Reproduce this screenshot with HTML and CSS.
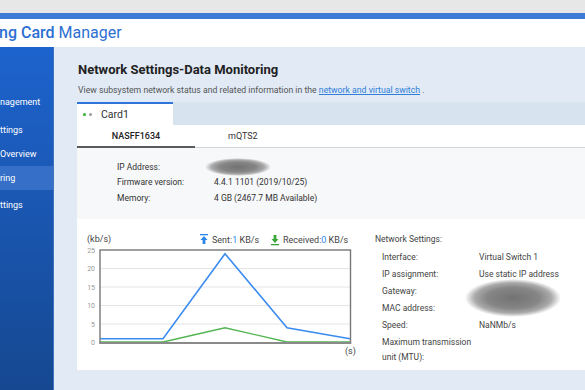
FILE: index.html
```html
<!DOCTYPE html>
<html lang="en">
<head>
    <meta charset="UTF-8">
    <title>Computing Card Manager</title>
    <link rel="stylesheet" href="styles.css">
</head>
<body>
    <div class="topbar"></div>
    <div class="stripe"></div>
    <div class="header">
        <span class="app-title"><b>ng Card</b> Manager</span>
    </div>
    <div class="layout">
        <div class="sidebar">
            <div class="nav-item first">nagement</div>
            <div class="nav-item">ttings</div>
            <div class="nav-item">Overview</div>
            <div class="nav-item active">ring</div>
            <div class="nav-item">ttings</div>
        </div>
        <div class="main">
            <h1>Network Settings-Data Monitoring</h1>
            <p class="description">View subsystem network status and related information in the <a href="#">network and virtual switch</a> .</p>

            <div class="card-tabs">
                <div class="card-tab">
                    <span class="dot green"></span><span class="dot gray"></span>
                    <span>Card1</span>
                </div>
            </div>

            <div class="panel">
                <div class="sub-tabs">
                    <div class="sub-tab active">NASFF1634</div>
                    <div class="sub-tab">mQTS2</div>
                </div>

                <div class="info">
                    <span>IP Address:</span><span class="masked"><span class="blur small"></span></span>
                    <span>Firmware version:</span><span>4.4.1 1101 (2019/10/25)</span>
                    <span>Memory:</span><span>4 GB (2467.7 MB Available)</span>
                </div>

                <div class="monitor">
                    <svg class="chart" width="295" height="150" viewBox="0 0 295 150">
                        <text x="7" y="23" class="unit">(kb/s)</text>
                        <!-- legend -->
                        <g fill="#2b86e6">
                            <rect x="120" y="15" width="8" height="1.3"/>
                            <path d="M124 17 L120.5 21 L122.6 21 L122.6 25 L125.4 25 L125.4 21 L127.5 21 Z"/>
                        </g>
                        <text x="132" y="23.5" class="legend">Sent:<tspan fill="#2b86e6">1</tspan> KB/s</text>
                        <g fill="#3aa63a">
                            <path d="M195 24 L191.5 20 L193.6 20 L193.6 16 L196.4 16 L196.4 20 L198.5 20 Z"/>
                            <rect x="191" y="25" width="8" height="1.3"/>
                        </g>
                        <text x="203" y="23.5" class="legend">Received:<tspan fill="#2b86e6">0</tspan> KB/s</text>

                        <!-- grid -->
                        <g stroke="#e4e4e4" stroke-width="1">
                            <line x1="20" y1="49.5" x2="270" y2="49.5"/>
                            <line x1="20" y1="68" x2="270" y2="68"/>
                            <line x1="20" y1="86.5" x2="270" y2="86.5"/>
                            <line x1="20" y1="105" x2="270" y2="105"/>
                        </g>
                        <g class="axis">
                            <text x="15" y="33.5">25</text>
                            <text x="15" y="52">20</text>
                            <text x="15" y="70.5">15</text>
                            <text x="15" y="89">10</text>
                            <text x="15" y="107.5">5</text>
                            <text x="15" y="126">0</text>
                        </g>
                        <polyline points="20,119.8 83,119.8 145,34.7 207,108.7 270,119.8" fill="none" stroke="#3b8cf0" stroke-width="1.6"/>
                        <polyline points="20,123 83,123 145,108.7 207,123 270,123" fill="none" stroke="#52b552" stroke-width="1.4"/>
                        <rect x="20" y="31" width="250.5" height="93" fill="none" stroke="#777" stroke-width="1.4"/>
                        <line x1="19.3" y1="124" x2="271.2" y2="124" stroke="#8a8a8a" stroke-width="2"/>
                        <text x="265" y="135" class="unit">(s)</text>
                    </svg>

                    <div class="net">
                        <div class="net-title">Network Settings:</div>
                        <div class="net-grid">
                            <span>Interface:</span><span>Virtual Switch 1</span>
                            <span>IP assignment:</span><span>Use static IP address</span>
                            <span>Gateway:</span><span class="masked"><span class="blur large"></span></span>
                            <span>MAC address:</span><span></span>
                            <span>Speed:</span><span>NaNMb/s</span>
                            <span class="two-line">Maximum transmission unit (MTU):</span><span></span>
                        </div>
                    </div>
                </div>
            </div>
        </div>
    </div>
</body>
</html>
```

FILE: styles.css
```css
body {
    margin: 0;
    width: 585px;
    height: 390px;
    overflow: hidden;
    font-family: Roboto, "Liberation Sans", sans-serif;
    background-color: #e1eaf5;
}
.topbar {
    height: 13px;
    background-color: #e7e7e7;
}
.stripe {
    height: 6px;
    background-color: #3d7bd7;
}
.header {
    height: 28px;
    background-color: #fff;
    line-height: 28px;
}
.app-title {
    font-size: 16px;
    color: #2d6fd2;
    margin-left: -1px;
}
.app-title b {
    font-weight: 500;
}
.layout {
    display: flex;
    height: 343px;
}
.sidebar {
    width: 54px;
    flex-shrink: 0;
    background: linear-gradient(#1d63cd, #1a56b0 50%, #154890);
    border-right: 1px solid #3f74bd;
    box-sizing: border-box;
}
.nav-item {
    height: 24px;
    line-height: 24px;
    color: #fff;
    font-size: 9px;
    white-space: nowrap;
    overflow: hidden;
}
.nav-item.first {
    margin-top: 43px;
    margin-bottom: 4px;
}
.nav-item.active {
    background-color: #356fc7;
    margin-bottom: 3px;
}
.main {
    flex: 1;
    padding: 15px 0 0 23px;
    overflow: hidden;
}
h1 {
    margin: 0 0 0 1px;
    font-size: 13px;
    line-height: 16px;
    font-weight: 700;
    color: #222;
}
.description {
    margin: 6px 0 0 1px;
    font-size: 8.7px;
    line-height: 12px;
    color: #555;
    white-space: nowrap;
}
.description a {
    color: #2f7ed8;
}
.card-tabs {
    margin-top: 6px;
    height: 23px;
    background-color: #d8e3f0;
    display: flex;
}
.card-tab {
    width: 96px;
    box-sizing: border-box;
    background-color: #fff;
    border-top: 2px solid #2f74d9;
    display: flex;
    align-items: center;
    padding-left: 6px;
    font-size: 10.5px;
    color: #333;
}
.dot {
    width: 3px;
    height: 3px;
    border-radius: 50%;
    margin-right: 3px;
}
.dot.green {
    background-color: #2fb52f;
}
.dot.gray {
    background-color: #999;
    margin-right: 9px;
}
.panel {
    height: 245px;
    background-color: #fff;
}
.sub-tabs {
    display: flex;
    height: 23px;
    border-bottom: 1px solid #d4d4d4;
    box-sizing: border-box;
}
.sub-tab {
    font-size: 9px;
    color: #333;
    line-height: 22px;
    text-align: center;
}
.sub-tab.active {
    width: 118px;
    font-weight: 500;
    color: #222;
    border-bottom: 2px solid #5a5a5a;
    margin-bottom: -1px;
}
.sub-tab + .sub-tab {
    padding-left: 33px;
}
.info {
    background-color: #f7f8fa;
    height: 71px;
    box-sizing: border-box;
    padding: 11px 0 0 40px;
    display: grid;
    grid-template-columns: 97px auto;
    grid-auto-rows: 15.5px;
    align-items: center;
    align-content: start;
    font-size: 8.5px;
    color: #333;
}
.masked {
    position: relative;
    height: 100%;
}
.blur {
    position: absolute;
    border-radius: 50%;
    background: radial-gradient(closest-side, #727272 0%, #868686 55%, #aaa 80%, rgba(200, 200, 200, 0) 100%);
    filter: blur(0.6px);
}
.blur.small {
    left: -9px;
    top: -1px;
    width: 66px;
    height: 18px;
}
.blur.large {
    left: -14px;
    top: -3px;
    width: 96px;
    height: 38px;
}
.monitor {
    display: flex;
}
.chart {
    display: block;
    margin-left: 3px;
    flex-shrink: 0;
}
.chart text {
    font-family: Roboto, "Liberation Sans", sans-serif;
}
.chart .unit,
.chart .legend {
    font-size: 9px;
    fill: #444;
}
.chart .axis text {
    font-size: 7px;
    fill: #999;
    text-anchor: end;
}
.net {
    padding-top: 12px;
    font-size: 8.5px;
    color: #444;
}
.net-title {
    line-height: 17px;
}
.net-grid {
    padding-left: 7px;
    display: grid;
    grid-template-columns: 97px 110px;
    grid-auto-rows: 17px;
    align-items: center;
}
.two-line {
    line-height: 15px;
    align-self: start;
    margin-top: 2px;
}
```
